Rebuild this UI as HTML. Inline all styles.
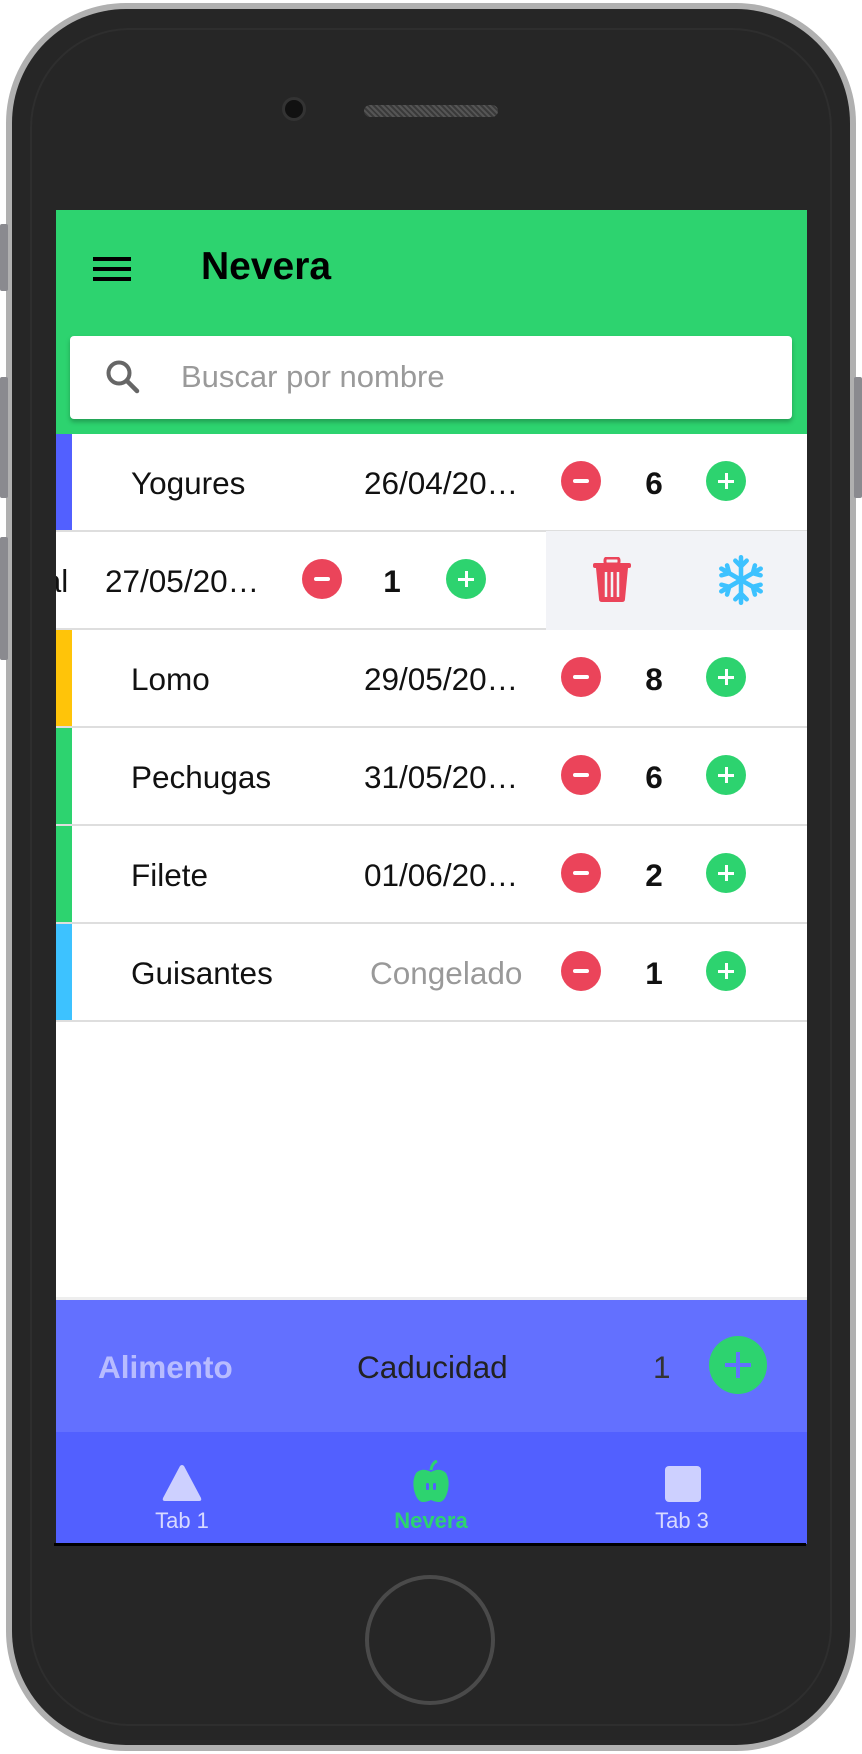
<!DOCTYPE html>
<html><head><meta charset="utf-8"><style>
*{margin:0;padding:0;box-sizing:border-box}
body{width:862px;height:1754px;background:#fff;position:relative;overflow:hidden;font-family:"Liberation Sans",Arial,sans-serif}
.abs{position:absolute}
.phone{left:6px;top:3px;width:850px;height:1748px;border-radius:120px;background:#b0b0b0}
.phone2{left:12px;top:9px;width:838px;height:1736px;border-radius:114px;background:#262626}
.phone3{left:30px;top:28px;width:802px;height:1698px;border-radius:100px;border:2px solid #2e2e2e}
.btn{background:#8a8a8f;width:8px;border-radius:2px}
.screen{left:56px;top:210px;width:751px;height:1334px;background:#fff;overflow:hidden}
.hdr{left:0;top:0;width:751px;height:224px;background:#2dd36f}
.search{left:14px;top:126px;width:722px;height:83px;background:#fff;border-radius:4px;box-shadow:0 3px 5px rgba(0,0,0,.25)}
.row{left:0;width:751px;height:98px;border-bottom:2px solid #dedede;font-size:31.5px;color:#111}
.bar{left:0;top:0;width:16px;height:96px}
.t{position:absolute;top:31px;white-space:nowrap}
.c{position:absolute;top:27px;width:40px;height:40px;border-radius:50%}
.m{background:#eb445a}.p{background:#2dd36f}
.m::after{content:"";position:absolute;left:12px;top:18px;width:16px;height:4px;background:#fff;border-radius:2px}
.p::after{content:"";position:absolute;left:12px;top:18.5px;width:16px;height:3px;background:#fff}
.p::before{content:"";position:absolute;left:18.5px;top:12px;width:3px;height:16px;background:#fff}
.n{font-weight:bold;width:40px;text-align:center}
</style></head><body>
<div class="abs phone"></div>
<div class="abs phone2"></div>
<div class="abs phone3"></div>
<div class="abs btn" style="left:0;top:224px;height:67px"></div>
<div class="abs btn" style="left:0;top:377px;height:121px"></div>
<div class="abs btn" style="left:0;top:537px;height:123px"></div>
<div class="abs btn" style="left:854px;top:377px;height:121px"></div>
<div class="abs" style="left:282px;top:97px;width:24px;height:24px;border-radius:50%;background:#111;border:3px solid #333"></div>
<div class="abs" style="left:364px;top:105px;width:134px;height:12px;border-radius:6px;background:repeating-linear-gradient(45deg,#555 0 2px,#3a3a3a 2px 4px)"></div>
<div class="abs" style="left:365px;top:1575px;width:130px;height:130px;border-radius:50%;border:4px solid #4a4a4a"></div>

<div class="abs screen">
 <div class="abs hdr">
  <div class="abs" style="left:37px;top:47px;width:38px;height:4px;background:#000;box-shadow:0 10px 0 #000,0 20px 0 #000"></div>
  <div class="abs" style="left:145px;top:35px;font-size:39px;font-weight:bold;color:#000">Nevera</div>
  <div class="abs search">
   <svg class="abs" style="left:34px;top:22px" width="38" height="38" viewBox="0 0 38 38"><circle cx="15" cy="15" r="10.5" fill="none" stroke="#666" stroke-width="4"/><path d="M23 23 L33 33" stroke="#666" stroke-width="4.5" stroke-linecap="round"/></svg>
   <div class="abs" style="left:111px;top:23px;font-size:31px;color:#9a9a9a">Buscar por nombre</div>
  </div>
 </div>
 <div class="abs row" style="top:224px"><div class="abs bar" style="background:#5260ff"></div>
  <div class="t" style="left:75px">Yogures</div><div class="t" style="left:308px">26/04/20…</div>
  <div class="c m" style="left:505px"></div><div class="t n" style="left:578px">6</div><div class="c p" style="left:650px"></div></div>
 <div class="abs row" style="top:322px;border-bottom:none">
  <div class="abs" style="left:0;top:96px;width:490px;height:2px;background:#dedede"></div>
  <div class="t" style="left:-28px">sal</div><div class="t" style="left:49px">27/05/20…</div>
  <div class="c m" style="left:246px"></div><div class="t n" style="left:316px">1</div><div class="c p" style="left:390px"></div>
  <div class="abs" style="left:490px;top:-1px;width:261px;height:99px;background:#f2f3f7">
   <svg class="abs" style="left:46px;top:26px" width="40" height="46" viewBox="0 0 40 46"><rect x="13" y="1" width="14" height="6" rx="2" fill="none" stroke="#eb445a" stroke-width="3"/><rect x="1" y="6" width="38" height="5" rx="2" fill="#eb445a"/><path d="M4 11 H36 L33 42 Q33 45 30 45 H10 Q7 45 7 42 Z" fill="#eb445a"/><path d="M14 15 V40 M20 15 V40 M26 15 V40" stroke="#f2f3f7" stroke-width="2.5"/></svg>
   <svg class="abs" style="left:170px;top:24px" width="50" height="50" viewBox="-22 -22 44 44"><g stroke="#3dc2ff" stroke-width="4" stroke-linecap="round" fill="none"><path d="M0 -20 V20 M-5 -17 L0 -12 L5 -17 M-5 17 L0 12 L5 17"/><g transform="rotate(60)"><path d="M0 -20 V20 M-5 -17 L0 -12 L5 -17 M-5 17 L0 12 L5 17"/></g><g transform="rotate(-60)"><path d="M0 -20 V20 M-5 -17 L0 -12 L5 -17 M-5 17 L0 12 L5 17"/></g></g></svg>
  </div></div>
 <div class="abs row" style="top:420px"><div class="abs bar" style="background:#ffc409"></div>
  <div class="t" style="left:75px">Lomo</div><div class="t" style="left:308px">29/05/20…</div>
  <div class="c m" style="left:505px"></div><div class="t n" style="left:578px">8</div><div class="c p" style="left:650px"></div></div>
 <div class="abs row" style="top:518px"><div class="abs bar" style="background:#2dd36f"></div>
  <div class="t" style="left:75px">Pechugas</div><div class="t" style="left:308px">31/05/20…</div>
  <div class="c m" style="left:505px"></div><div class="t n" style="left:578px">6</div><div class="c p" style="left:650px"></div></div>
 <div class="abs row" style="top:616px"><div class="abs bar" style="background:#2dd36f"></div>
  <div class="t" style="left:75px">Filete</div><div class="t" style="left:308px">01/06/20…</div>
  <div class="c m" style="left:505px"></div><div class="t n" style="left:578px">2</div><div class="c p" style="left:650px"></div></div>
 <div class="abs row" style="top:714px"><div class="abs bar" style="background:#3dc2ff"></div>
  <div class="t" style="left:75px">Guisantes</div><div class="t" style="left:314px;color:#999">Congelado</div>
  <div class="c m" style="left:505px"></div><div class="t n" style="left:578px">1</div><div class="c p" style="left:650px"></div></div>

 <div class="abs" style="left:0;top:1087px;width:751px;height:4px;background:#eee"></div>
 <div class="abs" style="left:0;top:1090px;width:751px;height:132px;background:#6370ff">
  <div class="abs" style="left:42px;top:49px;font-size:31.5px;font-weight:bold;color:#b8bcff">Alimento</div>
  <div class="abs" style="left:301px;top:49px;font-size:31.5px;color:#222">Caducidad</div>
  <div class="abs" style="left:597px;top:49px;font-size:31.5px;color:#333">1</div>
  <div class="abs" style="left:653px;top:36px;width:58px;height:58px;border-radius:50%;background:#2dd36f">
   <div class="abs" style="left:16px;top:27px;width:26px;height:4px;background:#6370ff"></div>
   <div class="abs" style="left:27px;top:16px;width:4px;height:26px;background:#6370ff"></div></div>
 </div>
 <div class="abs" style="left:0;top:1222px;width:751px;height:112px;background:#5260ff">
  <svg class="abs" style="left:106px;top:32px" width="40" height="38" viewBox="0 0 40 38"><path d="M18 2 Q20 0 22 2 L39 34 Q40 37 37 37 H3 Q0 37 1 34 Z" fill="#cdd0ff"/></svg>
  <div class="abs" style="left:0;top:76px;width:252px;text-align:center;font-size:22px;color:#d8daff">Tab 1</div>
  <svg class="abs" style="left:356px;top:28px" width="38" height="44" viewBox="0 0 38 44"><path d="M19 10 Q20 3 25 1" stroke="#2dd36f" stroke-width="3" fill="none"/><path d="M19 12 Q10 7 4 13 Q0 20 2 30 Q5 42 11 42 Q15 42 19 40 Q23 42 27 42 Q33 42 36 30 Q38 20 34 13 Q28 7 19 12Z" fill="#2dd36f"/><rect x="14" y="23" width="3" height="7" rx="1.5" fill="#5260ff"/><rect x="21" y="23" width="3" height="7" rx="1.5" fill="#5260ff"/></svg>
  <div class="abs" style="left:250px;top:76px;width:250px;text-align:center;font-size:22px;font-weight:bold;color:#2dd36f">Nevera</div>
  <div class="abs" style="left:609px;top:34px;width:36px;height:36px;border-radius:4px;background:#cdd0ff"></div>
  <div class="abs" style="left:500px;top:76px;width:252px;text-align:center;font-size:22px;color:#d8daff">Tab 3</div>
 </div>
</div>
<div class="abs" style="left:54px;top:1543px;width:752px;height:3px;background:#000"></div>
</body></html>
